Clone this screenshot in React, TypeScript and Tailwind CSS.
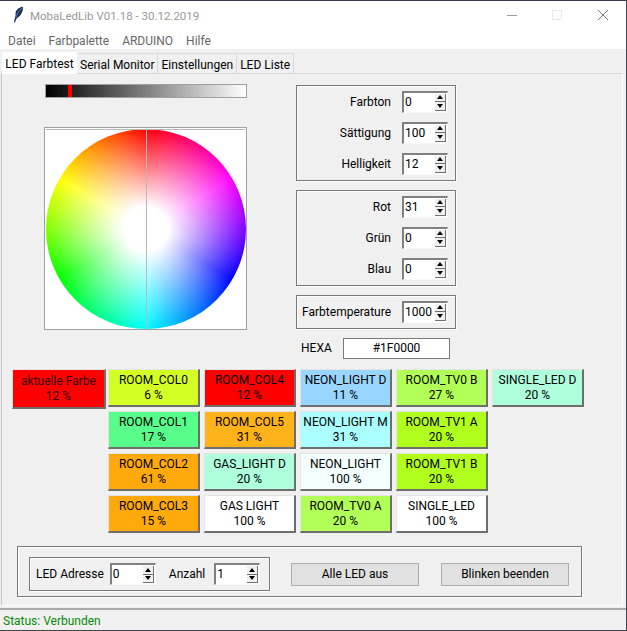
import React from "react";

const TABS = ["Serial Monitor", "Einstellungen", "LED Liste"];
const MENU = ["Datei", "Farbpalette", "ARDUINO", "Hilfe"];

const LED_BUTTONS: { label: string; pct: string; color: string }[] = [
  { label: "ROOM_COL0", pct: "6 %", color: "bg-[#d4ff24]" },
  { label: "ROOM_COL4", pct: "12 %", color: "bg-[#ff0000]" },
  { label: "NEON_LIGHT D", pct: "11 %", color: "bg-[#99d6ff]" },
  { label: "ROOM_TV0 B", pct: "27 %", color: "bg-[#b1ff57]" },
  { label: "SINGLE_LED D", pct: "20 %", color: "bg-[#aeffdc]" },
  { label: "ROOM_COL1", pct: "17 %", color: "bg-[#57ff8a]" },
  { label: "ROOM_COL5", pct: "31 %", color: "bg-[#ffb31a]" },
  { label: "NEON_LIGHT M", pct: "31 %", color: "bg-[#aaffff]" },
  { label: "ROOM_TV1 A", pct: "20 %", color: "bg-[#b0ff1d]" },
  { label: "", pct: "", color: "" },
  { label: "ROOM_COL2", pct: "61 %", color: "bg-[#ffaa0a]" },
  { label: "GAS_LIGHT D", pct: "20 %", color: "bg-[#aeffdc]" },
  { label: "NEON_LIGHT", pct: "100 %", color: "bg-[#f4ffff]" },
  { label: "ROOM_TV1 B", pct: "20 %", color: "bg-[#b0ff1d]" },
  { label: "", pct: "", color: "" },
  { label: "ROOM_COL3", pct: "15 %", color: "bg-[#ffaa0a]" },
  { label: "GAS LIGHT", pct: "100 %", color: "bg-white" },
  { label: "ROOM_TV0 A", pct: "20 %", color: "bg-[#b1ff57]" },
  { label: "SINGLE_LED", pct: "100 %", color: "bg-white" },
  { label: "", pct: "", color: "" },
];

const RAISED = "border border-t-[#e4e4e4] border-l-[#e4e4e4] border-r-2 border-b-2 border-r-[#6e6e6e] border-b-[#6e6e6e]";
const GROOVE = "border border-[#787878] shadow-[inset_1px_1px_0_#ffffff,1px_1px_0_#ffffff]";

function Spinbox({ value }: { value: string }) {
  return (
    <div className="flex h-[22px] w-[46px] items-stretch border border-t-2 border-l-2 border-t-[#808080] border-l-[#808080] border-r-[#f8f8f8] border-b-[#f8f8f8] bg-white">
      <span className="flex-1 pl-[1px] leading-[19px]">{value}</span>
      <div className="my-[1px] mr-[1px] flex w-[11px] flex-col">
        <div className="flex flex-1 items-center justify-center border-r border-b border-[#707070] bg-[#f0f0f0]">
          <div className="h-0 w-0 border-x-[3px] border-b-[4px] border-x-transparent border-b-black" />
        </div>
        <div className="flex flex-1 items-center justify-center border-r border-b border-[#707070] bg-[#f0f0f0]">
          <div className="h-0 w-0 border-x-[3px] border-t-[4px] border-x-transparent border-t-black" />
        </div>
      </div>
    </div>
  );
}

function SpinRow({ label, value }: { label: string; value: string }) {
  return (
    <div className="flex h-[22px] items-center justify-end gap-[11px]">
      <span>{label}</span>
      <Spinbox value={value} />
    </div>
  );
}

function Feather() {
  return (
    <svg width="12" height="18" viewBox="0 0 12 18">
      <path d="M2 16.5 C3 11 4 9 3.5 7 C4 3.5 8 1 11 0.8 C11.2 5 9 9.5 6.5 11 C5 12 4 13 2.8 16.8 Z" fill="#1d2c4a" />
      <path d="M3.8 12 C5 8 7 4.5 10 2" stroke="#4a80c8" strokeWidth="1" fill="none" />
    </svg>
  );
}

export default function App() {
  return (
    <div className="flex h-[631px] w-[627px] flex-col border-t border-r border-b border-t-[#3a3a4a] border-r-[#44444f] border-b-[#44444f] bg-[#f0f0f0] font-['Roboto',sans-serif] text-[12px] text-black">
      {/* title bar */}
      <div className="flex h-[29px] items-center bg-white pl-[12px]">
        <Feather />
        <span className="ml-[6px] pt-[2px] text-[11.5px] text-[#999999]">MobaLedLib V01.18 - 30.12.2019</span>
        <div className="ml-auto flex items-center">
          <div className="h-[1px] w-[10px] bg-[#999999]" />
          <div className="ml-[35px] h-[10px] w-[10px] border border-[#e8e8e8]" />
          <svg className="ml-[36px] mr-[18px]" width="10" height="10" viewBox="0 0 10 10">
            <path d="M0 0 L10 10 M10 0 L0 10" stroke="#777777" strokeWidth="1" />
          </svg>
        </div>
      </div>

      {/* menu */}
      <div className="flex h-[19px] items-center gap-[13px] bg-white pl-[8px] pt-[4px] text-[#666666]">
        {MENU.map((m) => (
          <span key={m}>{m}</span>
        ))}
      </div>

      {/* tabs */}
      <div className="flex h-[24px] items-end pl-[2px]">
        <div className="z-10 -mb-[1px] flex h-[22px] w-[75px] items-center justify-center bg-white pt-[2px]">LED Farbtest</div>
        {TABS.map((t) => (
          <div key={t} className="flex h-[20px] items-center border-t border-r border-[#d9d9d9] bg-[#f0f0f0] px-[3px] pt-[3px]">
            {t}
          </div>
        ))}
      </div>

      {/* page */}
      <div className="ml-[1px] mr-[3px] flex h-[536px] flex-col border border-[#d9d9d9] border-l-[#c4c4c4] border-r-white border-b-white pl-[10px]">
        <div className="flex">
          <div className="ml-[32px] flex w-[204px] flex-col pt-[10px]">
            <div className="relative ml-[1px] h-[14px] w-[202px] border border-[#a0a0a0] bg-[linear-gradient(to_right,#000,#fff)]">
              <div className="absolute left-[22px] top-0 h-full w-[4px] bg-[#ff0000]" />
            </div>
            <div className="relative mt-[29px] h-[203px] w-[203px] border border-[#a0a0a0] bg-white">
              <div className="mt-[1px] ml-[1px] h-[200px] w-[200px] rounded-full bg-[conic-gradient(#ff0000,#ff00ff,#0000ff,#00ffff,#00ff00,#ffff00,#ff0000)]">
                <div className="h-full w-full rounded-full bg-[radial-gradient(circle_closest-side,#ffffff_22%,#ffffff00_100%)]" />
              </div>
              <div className="absolute left-[1px] top-[1px] h-[1px] w-[199px] bg-[#b8b8b8]" />
              <div className="absolute left-[101px] top-[1px] h-[200px] w-[1px] bg-[#b8b8b8]" />
            </div>
          </div>

          <div className="ml-[48px] flex w-[160px] flex-col pt-[11px]">
            <div className={`flex h-[96px] flex-col justify-center gap-[9px] pr-[7px] ${GROOVE}`}>
              <SpinRow label="Farbton" value="0" />
              <SpinRow label="Sättigung" value="100" />
              <SpinRow label="Helligkeit" value="12" />
            </div>
            <div className={`mt-[9px] flex h-[96px] flex-col justify-center gap-[9px] pr-[7px] ${GROOVE}`}>
              <SpinRow label="Rot" value="31" />
              <SpinRow label="Grün" value="0" />
              <SpinRow label="Blau" value="0" />
            </div>
            <div className={`mt-[9px] flex h-[34px] flex-col justify-center pr-[7px] ${GROOVE}`}>
              <SpinRow label="Farbtemperature" value="1000" />
            </div>
            <div className="mt-[9px] flex items-center pl-[5px]">
              <span className="w-[42px]">HEXA</span>
              <div className="flex h-[21px] w-[107px] items-center justify-center border border-[#7a7a7a] bg-white">#1F0000</div>
            </div>
          </div>
        </div>

        {/* color buttons */}
        <div className="mt-[10px] flex">
          <div className="w-[96px]">
            <div className={`flex h-[40px] w-[94px] flex-col items-center justify-center bg-[#ff0000] pt-[2px] leading-[15px] text-[#300000] ${RAISED}`}>
              <span>aktuelle Farbe</span>
              <span>12 %</span>
            </div>
          </div>
          <div className="grid grid-cols-[repeat(5,92px)] gap-1">
            {LED_BUTTONS.map((b, i) =>
              b.label ? (
                <div key={i} className={`flex h-[38px] flex-col items-center justify-center whitespace-nowrap pt-[2px] leading-[15px] ${b.color} ${RAISED}`}>
                  <span>{b.label}</span>
                  <span>{b.pct}</span>
                </div>
              ) : (
                <div key={i} />
              )
            )}
          </div>
        </div>

        {/* bottom group */}
        <div className={`ml-[5px] mt-[13px] flex h-[51px] w-[565px] items-center pl-[11px] pt-[6px] ${GROOVE}`}>
          <div className={`flex h-[34px] w-[241px] items-center pl-[6px] ${GROOVE}`}>
            <span>LED Adresse</span>
            <div className="ml-[6px]"><Spinbox value="0" /></div>
            <span className="ml-[13px]">Anzahl</span>
            <div className="ml-[9px]"><Spinbox value="1" /></div>
          </div>
          <div className="ml-[21px] flex h-[23px] w-[128px] items-center justify-center border border-[#adadad] bg-[#e1e1e1]">Alle LED aus</div>
          <div className="ml-[22px] flex h-[23px] w-[128px] items-center justify-center border border-[#adadad] bg-[#e1e1e1]">Blinken beenden</div>
        </div>
      </div>

      {/* status */}
      <div className="mt-[2px] flex flex-1 items-center border-t-2 border-[#a8a8a8] pl-[3px] pt-[2px] text-[#0a8a0a]">Status: Verbunden</div>
    </div>
  );
}
